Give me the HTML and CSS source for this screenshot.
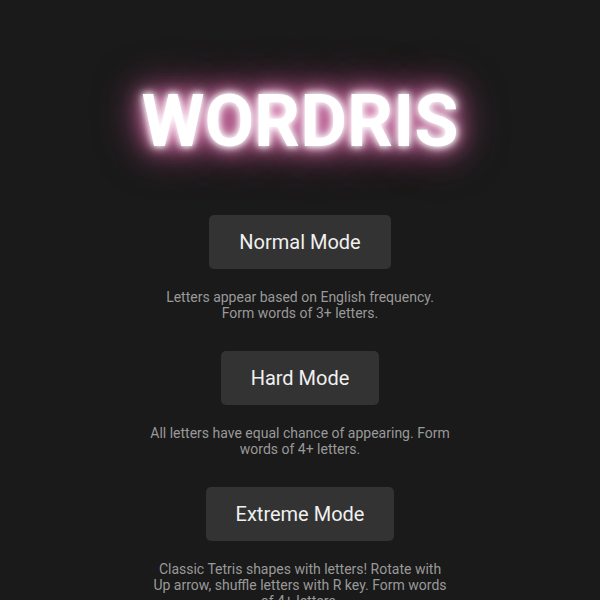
FILE: index.html
```html
<!DOCTYPE html>
<html>
<head>
<meta charset="utf-8">
<link rel="stylesheet" href="styles.css">
</head>
<body>
<main class="menu">
  <h1 class="title">WORDRIS</h1>
  <section class="mode">
    <button class="mode-btn">Normal Mode</button>
    <p class="mode-desc">Letters appear based on English frequency. Form words of 3+ letters.</p>
  </section>
  <section class="mode">
    <button class="mode-btn">Hard Mode</button>
    <p class="mode-desc">All letters have equal chance of appearing. Form words of 4+ letters.</p>
  </section>
  <section class="mode">
    <button class="mode-btn">Extreme Mode</button>
    <p class="mode-desc">Classic Tetris shapes with letters! Rotate with Up arrow, shuffle letters with R key. Form words of 4+ letters.</p>
  </section>
</main>
</body>
</html>
```
FILE: styles.css
```css
html, body {
  margin: 0;
  padding: 0;
  background: #1a1a1a;
  font-family: Roboto, "Liberation Sans", sans-serif;
}
.menu {
  display: flex;
  flex-direction: column;
  align-items: center;
  padding-top: 79px;
}
.title {
  margin: 0 0 51px;
  font-size: 72px;
  font-weight: 700;
  line-height: normal;
  color: #fff;
  text-shadow: 0 0 6px #fff, 0 0 12px #fff, 0 0 22px #f8c, 0 0 34px #d6a, 0 0 50px #a47;
}
.mode {
  display: flex;
  flex-direction: column;
  align-items: center;
  margin-bottom: 30px;
}
.mode-btn {
  font-family: inherit;
  font-size: 20px;
  color: #f0f0f0;
  background: #333;
  border: none;
  border-radius: 5px;
  padding: 15px 30px;
  line-height: 24px;
}
.mode-desc {
  margin: 20px 0 0;
  max-width: 300px;
  text-align: center;
  font-size: 14px;
  line-height: 16px;
  color: #999;
}
```
